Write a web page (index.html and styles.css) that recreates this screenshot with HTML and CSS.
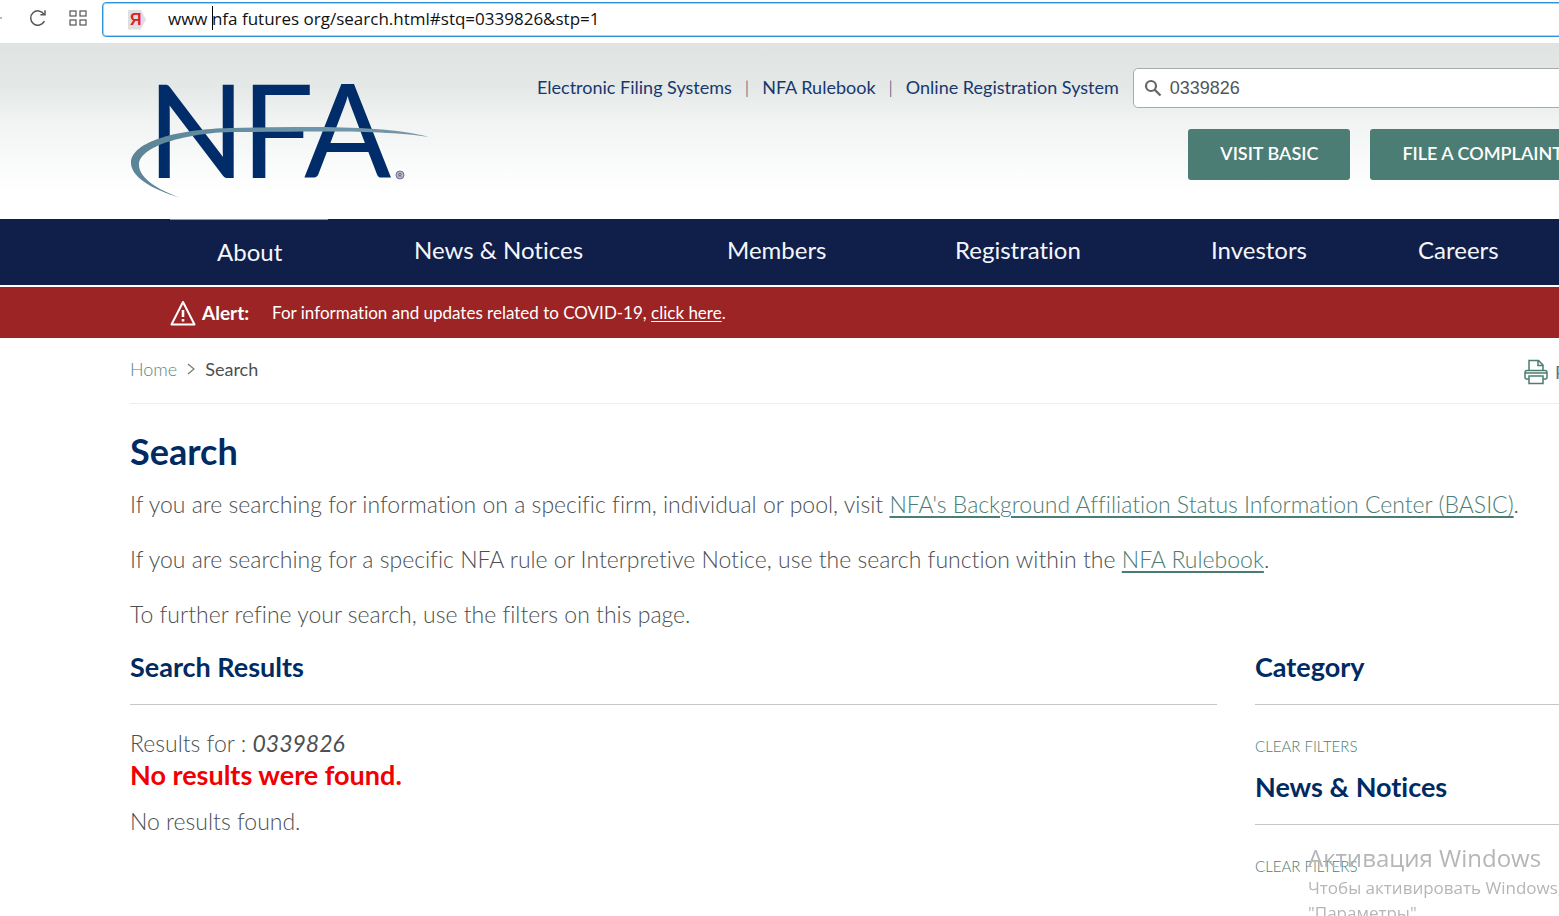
FILE: index.html
```html
<!DOCTYPE html>
<html lang="en">
<head>
<meta charset="utf-8">
<title>Search | NFA</title>
<link rel="stylesheet" href="styles.css">
</head>
<body>
<div class="browser-bar">
  <span class="tab-edge"></span>
  <button class="bar-button" aria-label="Reload"><svg width="20" height="20" viewBox="0 0 20 20" fill="none" stroke="#555" stroke-width="1.5"><path d="M16.4 13.2A7.2 7.2 0 1 1 16 6.2"/><path d="M12.4 6.8h4.6V2.2"/></svg></button>
  <button class="bar-button" aria-label="Speed dial"><svg width="18" height="16" viewBox="0 0 18 16" fill="none" stroke="#555" stroke-width="1.2"><rect x="1" y="1" width="6" height="5"/><rect x="11" y="1" width="6" height="5"/><rect x="1" y="10" width="6" height="5"/><rect x="11" y="10" width="6" height="5"/></svg></button>
  <div class="address">
    <span class="site-badge">Я</span>
    <input class="address-input" aria-label="Address" value="www nfa futures org/search.html#stq=0339826&amp;stp=1">
    <span class="caret"></span>
  </div>
</div>

<header class="site-header">
  <a class="logo" href="#" aria-label="NFA">
    <svg width="300" height="120" viewBox="0 0 300 120">
      <defs><linearGradient id="arc" x1="0" x2="1"><stop offset="0" stop-color="#5b8496"/><stop offset=".6" stop-color="#6d96ac"/><stop offset="1" stop-color="#7895a2"/></linearGradient></defs>
      <g class="logo-letters"><text x="17" y="99">N</text><text x="111" y="99">F</text><text x="174" y="99">A</text></g>
      <path d="M51 119C20 110 1 97 1 84C1 62 50 50 100 49C165 48 252 45 299 58C250 50 165 53 105 53C65 53 9 65 9 86C9 99 28 111 51 119Z" fill="url(#arc)"/>
      <circle cx="270" cy="96" r="4" fill="#b9bccb" stroke="#66719a"/><text class="mark" x="268" y="98">R</text>
    </svg>
  </a>
  <div class="header-tools">
    <div class="header-top">
      <nav class="quick-links"><a href="#">Electronic Filing Systems</a><i>|</i><a href="#">NFA Rulebook</a><i>|</i><a href="#">Online Registration System</a></nav>
      <label class="search-box"><svg width="18" height="18" viewBox="0 0 18 18" fill="none" stroke="#666" stroke-width="2.2"><circle cx="7" cy="7" r="5"/><path d="M10.6 10.6L16.5 16.5"/></svg><input aria-label="Search" value="0339826"></label>
    </div>
    <div class="actions"><button>VISIT BASIC</button><button>FILE A COMPLAINT</button></div>
  </div>
</header>

<nav class="main-nav">
  <a class="current" href="#">About</a><a href="#">News &amp; Notices</a><a href="#">Members</a><a href="#">Registration</a><a href="#">Investors</a><a href="#">Careers</a>
</nav>
<div class="alert">
  <svg width="26" height="26" viewBox="0 0 26 26" fill="none" stroke="#fff" stroke-width="2"><path d="M13 2L24.5 24.5H1.5Z" stroke-linejoin="round"/><path d="M13 10v7M13 19v2.500" stroke-width="2.600"/></svg>
  <strong>Alert:</strong><p>For information and updates related to COVID-19, <a href="#">click here</a>.</p>
</div>

<main class="page">
  <div class="crumb-row">
    <nav class="crumbs"><a href="#">Home</a><svg width="8" height="12" viewBox="0 0 8 12" fill="none" stroke="#777" stroke-width="1.2"><path d="M1 1l6 5-6 5"/></svg><span>Search</span></nav>
    <button class="print"><svg width="24" height="26" viewBox="0 0 24 26" fill="none" stroke="#4b7d74" stroke-width="1.5"><path d="M5 11V1.500h9.500L19 6v5M14 2v4.500h5"/><path d="M5 20H2.500Q1 20 1 18.500V13.500Q1 11.500 3 11.500H21Q23 11.500 23 13.500V18.500Q23 20 21.500 20H19"/><path d="M1 14h22M5 17h14v7.500H5z"/></svg>Print</button>
  </div>
  <h1>Search</h1>
  <div class="intro">
    <p>If you are searching for information on a specific firm, individual or pool, visit <a href="#">NFA's Background Affiliation Status Information Center (BASIC)</a>.</p>
    <p>If you are searching for a specific NFA rule or Interpretive Notice, use the search function within the <a href="#">NFA Rulebook</a>.</p>
    <p>To further refine your search, use the filters on this page.</p>
  </div>
  <div class="columns">
    <section class="results">
      <h2>Search Results</h2>
      <p class="query">Results for : <em>0339826</em></p>
      <p class="none">No results were found.</p>
      <p class="empty">No results found.</p>
    </section>
    <aside class="filters">
      <h2>Category</h2><button>CLEAR FILTERS</button>
      <h2>News &amp; Notices</h2><button>CLEAR FILTERS</button>
    </aside>
  </div>
</main>
<div class="watermark"><p class="watermark-title">Активация Windows</p><p>Чтобы активировать Windows, перейдите в раздел</p><p>"Параметры".</p></div>
</body>
</html>
```
FILE: styles.css
```css
* { box-sizing: border-box; }
body { margin: 0; min-height: 100vh; overflow: hidden; background: #fff; color: #4c4f51; font-family: Lato, sans-serif; font-size: 18px; font-variant-ligatures: none; }
p, h1, h2 { margin: 0; }
button { border: 0; padding: 0; background: none; font: inherit; color: inherit; }
input { border: 0; outline: 0; padding: 0; background: none; min-width: 0; }
svg { display: block; flex: none; }

.browser-bar { height: 43px; display: flex; align-items: flex-start; padding-top: 2px; }
.tab-edge { width: 2px; height: 2px; margin: 15px 26px 0 0; background: #bbb; }
.bar-button { height: 32px; width: 20px; margin-right: 20px; display: grid; place-items: center; }
.address { position: relative; flex: 1; height: 35px; margin: 0 -4px 0 -6px; display: flex; align-items: center; border: 1px solid #2f92d6; box-shadow: inset 0 0 0 1px #a8d3f0; border-radius: 4px; padding-left: 25px; }
.site-badge { width: 18px; height: 20px; margin-right: 22px; background: #dfdfe2; clip-path: polygon(0 0, 70% 0, 100% 50%, 70% 100%, 0 100%); color: #e02020; font: bold 16px/20px "Liberation Sans", sans-serif; padding-left: 2px; }
.address-input { flex: 1; height: 30px; padding-bottom: 2px; color: #111; font: 17px "Open Sans", sans-serif; }
.caret { position: absolute; left: 109px; top: 3px; width: 1px; height: 24px; background: #000; }

.site-header { height: 176px; display: flex; padding-left: 130px; background: linear-gradient(#dfe3e2, #e4e8e7 25%, #f1f4f3 45%, #fff 85%); }
.logo { width: 300px; padding-top: 36px; flex: none; }
.logo svg { overflow: visible; }
.logo-letters { font: 129px Lato, sans-serif; fill: #002d6a; }
.mark { font: 6px Lato, sans-serif; fill: #444f80; }
.header-tools { flex: 1; min-width: 0; padding: 25px 0 0 107px; }
.header-top { display: flex; align-items: center; gap: 14px; }
.quick-links { display: flex; gap: 13px; padding-bottom: 2px; white-space: nowrap; color: #17386f; font-size: 18px; }
.quick-links i { font-style: normal; font-weight: 300; }
.quick-links a { color: inherit; text-decoration: none; }
.search-box { flex: 1; height: 40px; margin-right: -6px; padding-left: 10px; display: flex; align-items: center; gap: 8px; background: #fff; border: 1px solid #aaa; border-radius: 5px; }
.search-box input { flex: 1; color: #51565a; font: 18px "Liberation Sans", sans-serif; }
.actions { display: flex; gap: 20px; justify-content: flex-end; margin: 21px -36px 0 0; }
.actions button { height: 51px; padding: 0 32px 3px; border-radius: 3px; background: #4b7d74; color: #fff; font-weight: 600; white-space: nowrap; }

.main-nav { height: 66px; display: grid; grid-template-columns: 197fr 313fr 228fr 256fr 207fr 141fr; align-items: center; padding: 0 0 5px 217px; background: #101e4a; }
.main-nav a { position: relative; color: #f4f6fa; font-size: 24px; text-decoration: none; white-space: nowrap; }
.main-nav .current { padding-top: 4px; }
.current::before { content: ""; position: absolute; top: -14px; left: -47px; width: 158px; height: 1px; background: #8795b3; }
.alert { height: 51px; margin-top: 2px; display: flex; align-items: center; padding-left: 170px; background: #9d2424; color: #fff; }
.alert strong { margin: 0 23px 0 6px; font-size: 19px; }
.alert p { font-size: 17px; }
.alert a { color: inherit; text-underline-offset: 2px; }

.page { padding-left: 130px; }
.crumb-row { height: 66px; display: flex; align-items: center; justify-content: space-between; border-bottom: 1px solid #eceeee; }
.crumbs { display: flex; align-items: center; gap: 10px; padding-bottom: 3px; }
.crumbs a { color: #5e857d; text-decoration: none; font-weight: 300; }
.print { display: flex; align-items: center; gap: 7px; padding-top: 3px; margin-right: -34px; color: #4b7d74; }
h1 { margin-top: 25px; color: #002b62; font-size: 36px; line-height: 44px; }
.intro { margin-top: 15px; display: grid; gap: 23px; font-size: 23px; line-height: 32px; font-weight: 300; white-space: nowrap; }
.intro a { color: #4b7d74; text-underline-offset: 3px; }
.columns { display: grid; grid-template-columns: 1087fr 304fr; gap: 38px; margin-top: 19px; }
h2 { height: 56px; color: #002b62; font-size: 27px; line-height: 36px; border-bottom: 1px solid #c4c6c8; white-space: nowrap; }
.results { font-size: 23px; line-height: 31px; font-weight: 300; }
.query { margin-top: 23px; }
.query em { font-weight: 400; }
.none { color: #f00000; font-size: 27px; font-weight: 700; }
.empty { margin-top: 16px; }
.filters button { display: block; height: 24px; margin: 29px 0 11px; color: #4b7d74; font-size: 15px; font-weight: 300; }
.watermark { position: fixed; left: calc(100vw - 251px); top: calc(100vh - 75px); color: #b4b6b8; font: 17px/25px "Open Sans", sans-serif; white-space: nowrap; }
.watermark-title { font-size: 24px; line-height: 34px; }
```
